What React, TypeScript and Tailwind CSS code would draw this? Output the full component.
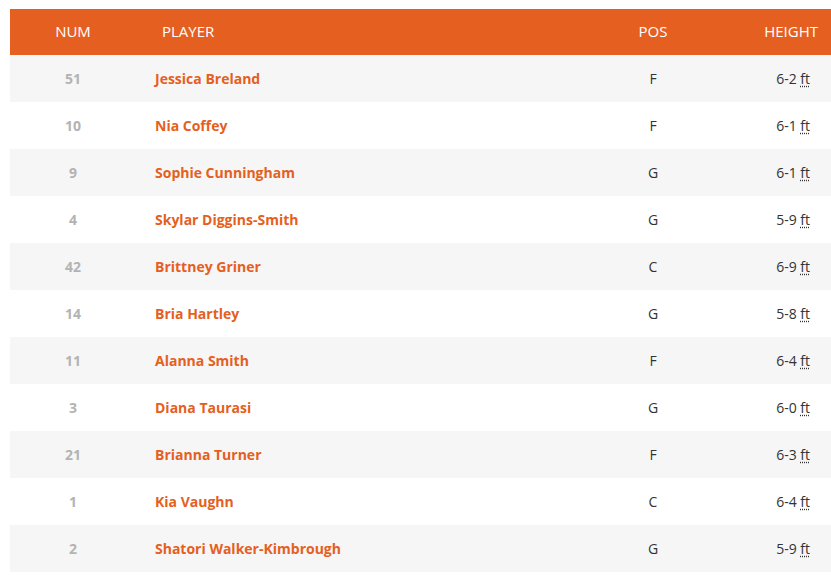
const players = [
  { num: 51, name: 'Jessica Breland', pos: 'F', height: '6-2' },
  { num: 10, name: 'Nia Coffey', pos: 'F', height: '6-1' },
  { num: 9, name: 'Sophie Cunningham', pos: 'G', height: '6-1' },
  { num: 4, name: 'Skylar Diggins-Smith', pos: 'G', height: '5-9' },
  { num: 42, name: 'Brittney Griner', pos: 'C', height: '6-9' },
  { num: 14, name: 'Bria Hartley', pos: 'G', height: '5-8' },
  { num: 11, name: 'Alanna Smith', pos: 'F', height: '6-4' },
  { num: 3, name: 'Diana Taurasi', pos: 'G', height: '6-0' },
  { num: 21, name: 'Brianna Turner', pos: 'F', height: '6-3' },
  { num: 1, name: 'Kia Vaughn', pos: 'C', height: '6-4' },
  { num: 2, name: 'Shatori Walker-Kimbrough', pos: 'G', height: '5-9' },
];

export default function App() {
  return (
    <div className="min-h-[576px] bg-white pl-[10px] pt-[9px] font-['Open_Sans',sans-serif] text-[14px]">
      <div className="w-[821px]">
        <div className="flex h-[46px] items-center bg-[#e55f21] pb-[2px] text-[15px] text-white">
          <div className="w-[126px] text-center">NUM</div>
          <div className="flex-1 pl-[26px]">PLAYER</div>
          <div className="w-[100px] text-center">POS</div>
          <div className="w-[128px] pr-[13px] text-right">HEIGHT</div>
        </div>
        {players.map((p, i) => (
          <div
            key={p.name}
            className={`flex h-[47px] items-center pb-[1px] ${i % 2 === 0 ? 'bg-[#f6f6f6]' : 'bg-white'}`}
          >
            <div className="w-[126px] text-center font-bold text-[#b3b3b3]">{p.num}</div>
            <div className="flex-1 pl-[19px] font-bold text-[#e55f21]">{p.name}</div>
            <div className="w-[100px] text-center text-[#333]">{p.pos}</div>
            <div className="w-[128px] pr-[21px] text-right text-[#333]">
              {p.height}{' '}
              <span className="underline decoration-dotted underline-offset-2">ft</span>
            </div>
          </div>
        ))}
      </div>
    </div>
  );
}
